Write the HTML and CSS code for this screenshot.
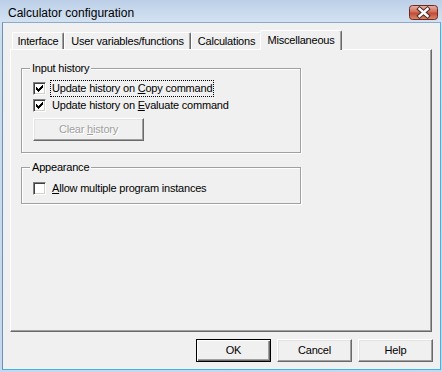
FILE: index.html
```html
<!DOCTYPE html>
<html>
<head>
<meta charset="utf-8">
<title>Calculator configuration</title>
<link rel="stylesheet" href="styles.css">
</head>
<body>
<div class="window">
  <div class="titlebar">
    <span class="title">Calculator configuration</span>
    <span class="close">
      <svg width="29" height="15" viewBox="0 0 29 15">
        <defs>
          <linearGradient id="cg" x1="0" y1="0" x2="0" y2="1">
            <stop offset="0" stop-color="#e8b3a6"/>
            <stop offset="0.45" stop-color="#d0705d"/>
            <stop offset="0.55" stop-color="#c24a36"/>
            <stop offset="1" stop-color="#d98a6e"/>
          </linearGradient>
        </defs>
        <rect x="0.5" y="0.5" width="28" height="14" rx="3" ry="3" fill="url(#cg)" stroke="#6e2a20"/>
        <path d="M10.5 4 L18.5 11 M18.5 4 L10.5 11" stroke="#4a2a26" stroke-width="4.4" stroke-linecap="square"/>
        <path d="M10.5 4 L18.5 11 M18.5 4 L10.5 11" stroke="#ffffff" stroke-width="2.4" stroke-linecap="square"/>
      </svg>
    </span>
  </div>
  <div class="client">
    <div class="tabs">
      <div class="tab w-interface">Interface</div>
      <div class="tab w-user">User variables/functions</div>
      <div class="tab w-calc">Calculations</div>
      <div class="tab selected w-misc">Miscellaneous</div>
    </div>
    <div class="panel">
      <fieldset class="group g-history">
        <legend>Input history</legend>
        <div class="row first">
          <span class="check"><svg width="11" height="11" viewBox="0 0 11 11" shape-rendering="crispEdges"><path d="M8 2h1v1h-1z M7 3h2v1h-2z M2 4h1v1h-1z M6 4h3v1h-3z M2 5h2v1h-2z M5 5h3v1h-3z M2 6h5v1h-5z M3 7h3v1h-3z M4 8h1v1h-1z" fill="#000"/></svg></span>
          <span class="label focus">Update history on <u>C</u>opy command</span>
        </div>
        <div class="row">
          <span class="check"><svg width="11" height="11" viewBox="0 0 11 11" shape-rendering="crispEdges"><path d="M8 2h1v1h-1z M7 3h2v1h-2z M2 4h1v1h-1z M6 4h3v1h-3z M2 5h2v1h-2z M5 5h3v1h-3z M2 6h5v1h-5z M3 7h3v1h-3z M4 8h1v1h-1z" fill="#000"/></svg></span>
          <span class="label">Update history on <u>E</u>valuate command</span>
        </div>
        <div class="btn disabled clear"><span>Clear <u>h</u>istory</span></div>
      </fieldset>
      <fieldset class="group g-appearance">
        <legend>Appearance</legend>
        <div class="row first">
          <span class="check"></span>
          <span class="label"><u>A</u>llow multiple program instances</span>
        </div>
      </fieldset>
    </div>
    <div class="buttons">
      <div class="btn default"><span>OK</span></div>
      <div class="btn"><span>Cancel</span></div>
      <div class="btn"><span>Help</span></div>
    </div>
  </div>
</div>
</body>
</html>
```

FILE: styles.css
```css
html, body {
  margin: 0;
  padding: 0;
  background: #f0f0f0;
}

.window {
  width: 442px;
  height: 372px;
  box-sizing: border-box;
  padding: 0 1px 2px 2px;
  display: flex;
  flex-direction: column;
  background: linear-gradient(#bccfe7 0px, #c9daee 12px, #d3e2f2 22px, #cbdcef 40px, #c6d8ed 100%);
  font-family: "Liberation Sans", Arial, sans-serif;
  font-size: 11px;
  color: #000;
}

.titlebar {
  height: 22px;
  flex: 0 0 22px;
  display: flex;
  justify-content: space-between;
  align-items: flex-start;
}

.title {
  font-size: 12px;
  line-height: 14px;
  padding: 6px 0 0 6px;
  color: #000;
}

.close {
  display: block;
  margin: 5px 3px 0 0;
  height: 15px;
}

.close svg {
  display: block;
}

.client {
  flex: 1;
  display: flex;
  flex-direction: column;
  background: #f0f0f0;
  border: 1px solid #8eaacb;
  border-left-color: #6f90b6;
  border-right-color: #3fb2e6;
  border-bottom-color: #3fb2e6;
  letter-spacing: -0.2px;
}

.tabs {
  display: flex;
  align-items: flex-end;
  height: 19px;
  margin: 7px 8px 0 7px;
  padding-left: 2px;
}

.tab {
  box-sizing: border-box;
  height: 17px;
  border-top: 1px solid #ffffff;
  border-left: 1px solid #ffffff;
  border-right: 1px solid #696969;
  border-radius: 2px 2px 0 0;
  box-shadow: inset -1px 0 0 #a0a0a0;
  background: #f0f0f0;
  text-align: center;
  line-height: 13px;
  padding-top: 2px;
  white-space: nowrap;
}

.w-interface { width: 52px; }
.w-user { width: 127px; }
.w-calc { width: 71px; }
.w-misc { width: 82px; }

.tab.selected {
  height: 20px;
  margin: 0 -2px -1px -2px;
  padding-top: 3px;
  position: relative;
  z-index: 1;
}

.panel {
  box-sizing: border-box;
  height: 283px;
  margin: 0 8px 0 7px;
  padding: 0 0 0 10px;
  border-top: 1px solid #ffffff;
  border-left: 1px solid #ffffff;
  border-right: 1px solid #696969;
  border-bottom: 1px solid #696969;
  box-shadow: inset -1px -1px 0 #a0a0a0;
  display: flex;
  flex-direction: column;
  align-items: flex-start;
}

.group {
  box-sizing: border-box;
  width: 280px;
  margin: 0;
  padding: 0 0 0 8px;
  border: 1px solid #a0a0a0;
  box-shadow: inset 1px 1px 0 #ffffff, 1px 1px 0 #ffffff;
  min-width: 0;
}

.group legend {
  padding: 0 2px;
  line-height: 13px;
  background: #f0f0f0;
}

.g-history {
  margin-top: 12px;
  padding-bottom: 11px;
}

.g-appearance {
  margin-top: 8px;
  padding-bottom: 6px;
}

.row {
  display: flex;
  align-items: center;
  height: 17px;
  padding-left: 3px;
}

.g-history .row.first {
  margin-top: 5px;
}

.g-appearance .row.first {
  margin-top: 6px;
}

.check {
  box-sizing: border-box;
  width: 13px;
  height: 13px;
  flex: 0 0 13px;
  background: #ffffff;
  border-top: 1px solid #808080;
  border-left: 1px solid #808080;
  border-bottom: 1px solid #ffffff;
  border-right: 1px solid #ffffff;
  box-shadow: inset 1px 1px 0 #404040, inset -1px -1px 0 #d4d0c8;
}

.check svg {
  display: block;
}

.label {
  margin-left: 4px;
  padding: 1px 1px;
  line-height: 13px;
  border: 1px solid transparent;
  white-space: nowrap;
}

.label.focus {
  border: 1px dotted #000;
}

.btn {
  box-sizing: border-box;
  width: 75px;
  height: 23px;
  display: flex;
  align-items: center;
  justify-content: center;
  background: #f0f0f0;
  border-top: 1px solid #ffffff;
  border-left: 1px solid #ffffff;
  border-right: 1px solid #696969;
  border-bottom: 1px solid #696969;
  box-shadow: inset -1px -1px 0 #a0a0a0, inset 1px 1px 0 #e3e3e3;
  line-height: 13px;
  white-space: nowrap;
}

.btn.default {
  border: 1px solid #000000;
  box-shadow: inset 1px 1px 0 #ffffff, inset -1px -1px 0 #696969, inset -2px -2px 0 #a0a0a0;
}

.btn.disabled {
  color: #a0a0a0;
  text-shadow: 1px 1px 0 #ffffff;
}

.clear {
  width: 111px;
  margin: 4px 0 0 3px;
}

.buttons {
  display: flex;
  justify-content: flex-end;
  gap: 6px;
  margin: 7px 7px 0 0;
}
```
